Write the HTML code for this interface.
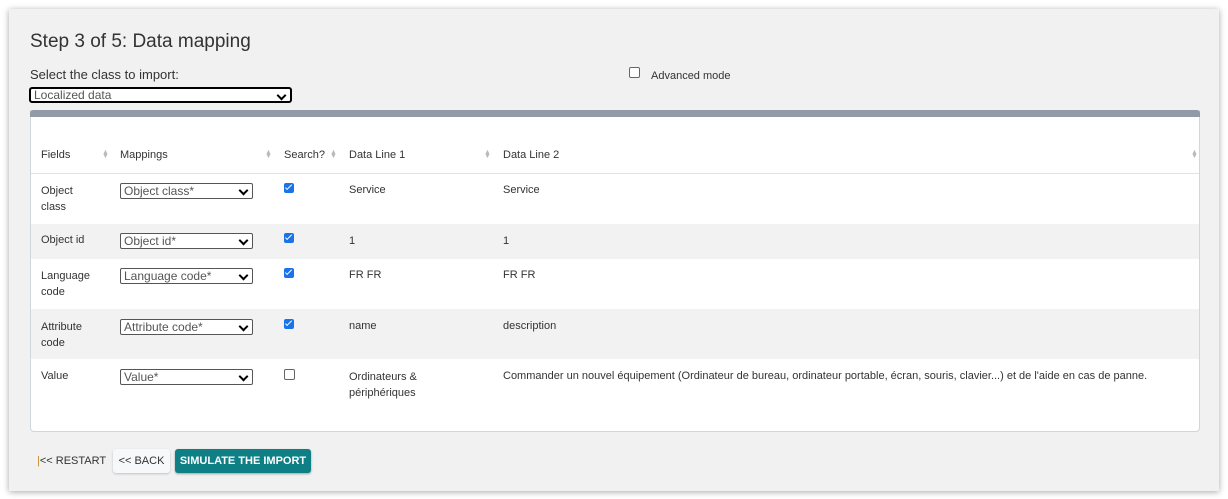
<!DOCTYPE html><html><head><style>
body{margin:0;width:1228px;height:499px;background:#fff;font-family:"Liberation Sans",sans-serif;color:#333;overflow:hidden;position:relative}
.panel{position:absolute;left:9px;top:9px;width:1210px;height:482px;background:#f1f1f1;box-shadow:0 1px 6px rgba(0,0,0,.35)}
.a{position:absolute;white-space:nowrap}
h1{position:absolute;left:30px;top:31px;margin:0;font-weight:normal;font-size:19px;color:#333}
.card{position:absolute;left:30px;top:110px;width:1170px;height:322px;background:#fff;border:1px solid #cfd6de;border-top:none;border-radius:0 0 4px 4px;box-sizing:border-box}
.bar{position:absolute;left:30px;top:110px;width:1170px;height:7px;background:#919ba8;border-radius:3px 3px 0 0}
.row{position:absolute;left:31px;width:1168px}
.t{font-size:11px;color:#333}
.sel{position:absolute;height:16px;border:1px solid #555;border-radius:2px;background:#fff;font-size:12px;color:#555;box-sizing:border-box;line-height:14px;padding-left:3px}
.sel::after{content:"";position:absolute;right:5px;top:3px;width:5px;height:5px;border-right:2px solid #000;border-bottom:2px solid #000;transform:rotate(45deg)}
.cb{position:absolute;width:10px;height:10px;border-radius:2px;background:#1a73e8;}
.cb::after{content:"";position:absolute;left:3px;top:0px;width:2px;height:6px;border-right:1.5px solid #fff;border-bottom:1.5px solid #fff;transform:rotate(45deg)}
.cbo{position:absolute;width:9px;height:9px;border:1px solid #666;border-radius:2px;background:#fff}
.srt{position:absolute;font-size:7px;color:#bbb;line-height:4px}
</style></head><body>
<div class="panel"></div>
<h1>Step 3 of 5: Data mapping</h1>
<div class="a" style="left:30px;top:67px;font-size:13px">Select the class to import:</div>
<div class="sel" style="left:29px;top:87px;width:263px;height:16px;border:2px solid #000;border-radius:3px;font-size:12px;color:#555;line-height:12px">Localized data</div>
<div class="cbo" style="left:629px;top:67px"></div>
<div class="a t" style="left:651px;top:70px">Advanced mode</div>
<div class="card"></div><div class="bar"></div>
<div class="row" style="top:224px;height:35px;background:#f2f2f2"></div>
<div class="row" style="top:309px;height:50px;background:#f2f2f2"></div>
<div class="row" style="top:173px;height:1px;background:#dde2e8"></div>
<div class="a t" style="left:41px;top:149px">Fields</div>
<div class="a t" style="left:120px;top:149px">Mappings</div>
<div class="a t" style="left:284px;top:149px">Search?</div>
<div class="a t" style="left:349px;top:149px">Data Line 1</div>
<div class="a t" style="left:503px;top:149px">Data Line 2</div>
<div class="srt" style="left:102px;top:151px">▲<br>▼</div>
<div class="srt" style="left:265px;top:151px">▲<br>▼</div>
<div class="srt" style="left:330px;top:151px">▲<br>▼</div>
<div class="srt" style="left:484px;top:151px">▲<br>▼</div>
<div class="srt" style="left:1191px;top:151px">▲<br>▼</div>

<div class="a t" style="left:41px;top:183px;line-height:16px">Object<br>class</div>
<div class="sel" style="left:120px;top:183px;width:133px">Object class*</div>
<div class="cb" style="left:284px;top:183px"></div>
<div class="a t" style="left:349px;top:184px">Service</div>
<div class="a t" style="left:503px;top:184px">Service</div>

<div class="a t" style="left:41px;top:234px">Object id</div>
<div class="sel" style="left:120px;top:233px;width:133px">Object id*</div>
<div class="cb" style="left:284px;top:233px"></div>
<div class="a t" style="left:349px;top:235px">1</div>
<div class="a t" style="left:503px;top:235px">1</div>

<div class="a t" style="left:41px;top:268px;line-height:16px">Language<br>code</div>
<div class="sel" style="left:120px;top:268px;width:133px">Language code*</div>
<div class="cb" style="left:284px;top:268px"></div>
<div class="a t" style="left:349px;top:269px">FR FR</div>
<div class="a t" style="left:503px;top:269px">FR FR</div>

<div class="a t" style="left:41px;top:319px;line-height:16px">Attribute<br>code</div>
<div class="sel" style="left:120px;top:319px;width:133px">Attribute code*</div>
<div class="cb" style="left:284px;top:319px"></div>
<div class="a t" style="left:349px;top:320px">name</div>
<div class="a t" style="left:503px;top:320px">description</div>

<div class="a t" style="left:41px;top:370px">Value</div>
<div class="sel" style="left:120px;top:369px;width:133px">Value*</div>
<div class="cbo" style="left:284px;top:369px"></div>
<div class="a t" style="left:349px;top:369px;line-height:16px">Ordinateurs &amp;<br>périphériques</div>
<div class="a t" style="left:503px;top:370px">Commander un nouvel équipement (Ordinateur de bureau, ordinateur portable, écran, souris, clavier...) et de l'aide en cas de panne.</div>

<div class="a t" style="left:37px;top:455px"><span style="color:#c08a2a">|</span>&lt;&lt; RESTART</div>
<div class="a t" style="left:113px;top:449px;width:57px;height:24px;background:#f7f8fa;border-radius:3px;box-shadow:0 1px 2px rgba(0,0,0,.2);text-align:center;line-height:24px">&lt;&lt; BACK</div>
<div class="a t" style="left:175px;top:449px;width:136px;height:24px;background:#0f7f86;color:#fff;border-radius:3px;box-shadow:0 1px 2px rgba(0,0,0,.35);text-align:center;line-height:24px;font-weight:bold">SIMULATE THE IMPORT</div>
</body></html>
